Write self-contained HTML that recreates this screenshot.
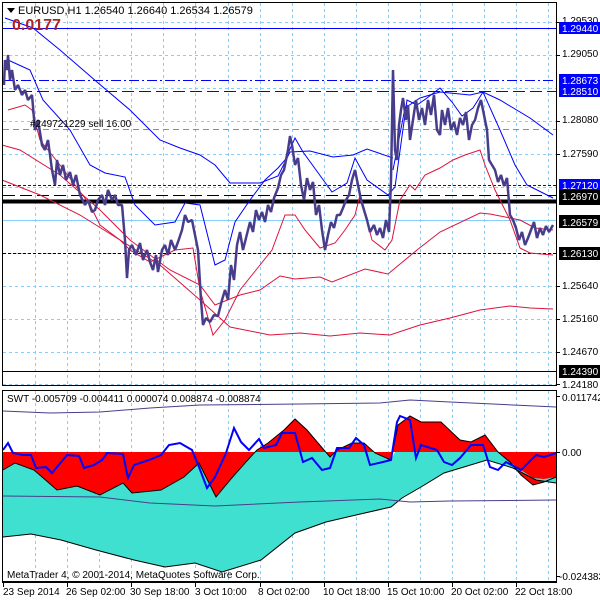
<!DOCTYPE html>
<html><head><meta charset="utf-8"><style>
html,body{margin:0;padding:0;background:#fff;}
svg{display:block;font-family:"Liberation Sans",sans-serif;}
</style></head><body>
<svg width="600" height="600" viewBox="0 0 600 600" xmlns="http://www.w3.org/2000/svg">
<rect width="600" height="600" fill="#fff"/>
<g stroke="#87cefa" stroke-width="1" stroke-dasharray="3,3" fill="none">
<path d="M35.5 3V385M67.5 3V385M99.5 3V385M131.5 3V385M163.5 3V385M195.5 3V385M228.5 3V385M260.5 3V385M292.5 3V385M324.5 3V385M356.5 3V385M388.5 3V385M420.5 3V385M452.5 3V385M484.5 3V385M516.5 3V385M548.5 3V385"/>
<path d="M3 22.5H556M3 55.5H556M3 88.5H556M3 121.5H556M3 154.5H556M3 187.5H556M3 253.5H556M3 286.5H556M3 319.5H556M3 352.5H556M3 384.5H556"/>
<path d="M35.5 391V582M67.5 391V582M99.5 391V582M131.5 391V582M163.5 391V582M195.5 391V582M228.5 391V582M260.5 391V582M292.5 391V582M324.5 391V582M356.5 391V582M388.5 391V582M420.5 391V582M452.5 391V582M484.5 391V582M516.5 391V582M548.5 391V582"/>
</g>
<path d="M3 28.5H556" stroke="#0000ff" stroke-width="1"/>
<path d="M3 80.5H556" stroke="#0000ff" stroke-dasharray="10,3,2,3"/>
<path d="M3 91.5H556" stroke="#0000ff" stroke-dasharray="12,5"/>
<path d="M3 129.5H556" stroke="#32cd32" stroke-dasharray="6,4"/>
<path d="M3 185.5H556" stroke="#0000ff" stroke-dasharray="3,2"/>
<path d="M3 195.5H556" stroke="#000" stroke-dasharray="12,5"/>
<path d="M3 201.5H556" stroke="#000" stroke-width="4"/>
<path d="M3 220.5H556" stroke="#87cefa"/>
<path d="M3 253.5H556" stroke="#000" stroke-dasharray="3,2"/>
<path d="M3 371.5H556" stroke="#000"/>
<g fill="none" stroke="#0000ff" stroke-width="1">
<polyline points="5,18 33,28 60,50 97,82 130,110 160,140 180,148 200,155 215,165 230,183 260,183 278,176 290,152 310,151 333,157 353,155 367,149 393,158"/>
<polyline points="8,60 30,70 43,100 70,130 90,165 105,173 125,177 135,205 155,225 175,222 185,203 200,205 215,265 225,260 235,222 250,200 265,180 278,168 285,160 295,138 303,152 332,192 347,183 355,158 367,180 388,195 395,187 407,100 417,105 427,98 440,88 452,102 462,116 473,108 483,92 500,130 515,165 527,185 553,198"/>
<polyline points="393,170 405,108 420,98 440,92 470,95 483,92 500,100 530,118 553,135"/>
</g>
<g fill="none" stroke="#dc143c" stroke-width="1">
<polyline points="8,110 25,105 32,110 40,140 60,165 90,205 100,225 120,240 130,250 150,262 175,250 193,248 200,290 213,335 225,320 240,290 260,265 272,250 285,215 295,215 305,230 320,248 335,243 345,230 355,215 360,195 372,240 385,250 392,240 400,200 410,185 415,190 425,175 440,168 453,160 465,155 480,150 485,165 495,190 510,220 520,248 530,253 553,255"/>
<polyline points="2,145 20,150 60,175 100,210 130,240 170,270 200,285 215,305 240,295 260,290 280,276 295,279 320,277 332,282 365,269 388,274 417,250 440,232 480,213 490,214 520,220 535,228 553,230"/>
<polyline points="2,180 40,195 80,215 120,240 160,265 200,300 230,327 270,335 300,333 330,336 360,333 390,335 420,325 450,318 480,310 510,306 530,308 553,309"/>
</g>
<polyline fill="none" stroke="#483d8b" stroke-width="2.5" stroke-linejoin="bevel" points="4,85 5,60 7,70 8,55 10,80 12,70 15,90 18,85 22,95 25,90 28,100 32,95 35,130 38,120 42,145 45,150 48,140 52,170 55,185 57,160 60,175 63,165 66,180 70,172 73,185 76,175 80,195 85,205 88,200 92,212 95,210 98,200 102,195 105,205 108,190 112,200 115,195 118,205 122,205 125,240 127,278 129,250 132,245 136,255 140,243 143,260 147,250 150,262 153,270 156,255 158,272 162,250 165,245 168,255 171,240 175,250 178,242 182,230 185,215 188,222 192,220 195,235 198,250 201,300 203,325 206,318 210,322 214,315 218,316 222,300 225,290 228,300 231,265 234,280 237,245 240,232 243,250 246,238 250,222 253,232 256,210 259,220 262,212 265,222 268,205 271,212 274,198 278,188 281,175 284,170 286,160 288,150 290,136 292,145 295,165 298,158 301,185 304,200 307,178 310,190 313,182 316,215 319,205 322,230 325,250 328,235 331,222 334,228 337,215 340,215 343,208 346,200 349,195 352,180 355,170 358,185 361,200 364,210 367,220 370,232 374,225 377,235 380,228 383,238 386,220 389,232 391,180 393,70 395,150 397,160 399,125 401,110 403,98 406,120 408,105 410,140 413,120 416,100 419,120 422,108 425,125 428,100 431,115 434,95 437,130 440,135 442,110 445,125 448,108 451,130 454,122 457,135 460,118 463,125 466,112 469,140 472,125 475,120 478,108 481,100 484,115 487,130 489,160 492,165 495,170 498,182 501,175 504,186 507,178 510,215 513,220 516,228 519,240 522,232 525,245 528,238 531,230 534,222 537,238 540,228 543,235 546,226 549,232 553,225"/>
<text x="30" y="127" font-size="10" fill="#000">#249721229 sell 16.00</text>
<rect x="2.5" y="2.5" width="554" height="383" fill="none" stroke="#000"/>
<rect x="2.5" y="390.5" width="554" height="191" fill="none" stroke="#000"/>
<path d="M2 582.5H557" stroke="#000"/>
<path d="M7 8h8l-4 5z" fill="#000"/>
<text x="18" y="14" font-size="11" fill="#000">EURUSD,H1  1.26540 1.26640 1.26534 1.26579</text>
<text x="12" y="30" font-size="16" font-weight="bold" fill="#b22222">0.0177</text>
<g font-size="10" fill="#000">
<text x="562" y="24">1.29530</text>
<text x="562" y="57">1.29050</text>
<text x="562" y="123">1.28080</text>
<text x="562" y="157">1.27590</text>
<text x="562" y="289">1.25640</text>
<text x="562" y="322">1.25160</text>
<text x="562" y="355">1.24670</text>
<text x="562" y="388">1.24180</text>
</g>
<g stroke="#000"><path d="M557 22.5h3M557 55.5h3M557 121.5h3M557 154.5h3M557 286.5h3M557 319.5h3M557 352.5h3M557 384.5h3"/></g>
<g font-size="10">
<rect x="559" y="22" width="41" height="12" fill="#0000ff"/><text x="562" y="32" fill="#fff">1.29440</text>
<rect x="559" y="74" width="41" height="12" fill="#0000ff"/><text x="562" y="84" fill="#fff">1.28673</text>
<rect x="559" y="85" width="41" height="12" fill="#0000ff"/><text x="562" y="95" fill="#fff">1.28510</text>
<rect x="559" y="179" width="41" height="12" fill="#0000ff"/><text x="562" y="189" fill="#fff">1.27120</text>
<rect x="559" y="190" width="41" height="15" fill="#000"/><text x="562" y="200" fill="#fff">1.26970</text>
<rect x="559" y="215" width="41" height="13" fill="#000"/><text x="562" y="226" fill="#fff">1.26579</text>
<rect x="559" y="247" width="41" height="13" fill="#000"/><text x="562" y="257" fill="#fff">1.26130</text>
<rect x="559" y="365" width="41" height="13" fill="#000"/><text x="562" y="375" fill="#fff">1.24390</text>
</g>
<polygon fill="#ff0000" points="3,452 3,470 15,463 34,470 57,490 77,486 100,495 123,483 132,493 161,490 184,477 199,463 216,497 230,480 245,463 257,450 268,443 284,430 295,419 307,430 318,443 330,457 337,450 352,443 364,443 375,453 391,460 398,425 410,416 421,422 441,422 460,440 471,442 485,435 498,452 510,462 521,475 533,485 544,482 556,477 556,452"/>
<polygon fill="#40e0d0" points="3,452 3,470 15,463 34,470 57,490 77,486 100,495 123,483 132,493 161,490 184,477 199,463 216,497 230,480 245,463 256,452 325,452 330,457 334,452 372,452 375,453 391,460 395,452 498,452 510,462 521,470 533,478 544,479 556,477 556,483 536,480 513,468 487,460 444,473 421,487 402,498 391,507 356,515 326,522 295,533 261,560 222,572 195,563 165,567 134,560 96,550 61,540 31,534 3,537"/>
<g fill="none" stroke="#000" stroke-width="1">
<polyline points="3,470 15,463 34,470 57,490 77,486 100,495 123,483 132,493 161,490 184,477 199,463 216,497 230,480 245,463 257,450 268,443 284,430 295,419 307,430 318,443 330,457 337,450 352,443 364,443 375,453 391,460 398,425 410,416 421,422 441,422 460,440 471,442 485,435 498,452 510,462 521,475 533,485 544,482 556,477"/>
<polyline points="3,537 31,534 61,540 96,550 134,560 165,567 195,563 222,572 261,560 295,533 326,522 356,515 391,507 402,498 421,487 444,473 487,460 513,468 536,480 556,483"/>
</g>
<g fill="none" stroke="#483d8b" stroke-width="1">
<polyline points="3,411 50,413 100,412 150,408 200,405 300,404 380,403 410,400 450,402 556,407"/>
<polyline points="3,496 100,497 150,503 215,506 300,502 380,499 410,502 450,501 556,500"/>
</g>
<polyline fill="none" stroke="#0000ff" stroke-width="2" points="3,450 8,443 13,453 23,455 31,455 36,468 46,467 52,473 57,467 67,455 79,456 84,468 94,465 102,460 107,453 123,454 128,478 134,465 149,460 161,455 169,445 180,443 192,450 199,467 207,488 215,477 226,453 234,428 241,442 249,450 259,439 264,448 276,445 282,433 295,433 303,462 312,458 322,470 330,468 337,448 349,448 356,438 364,445 370,465 383,462 391,460 397,422 400,416 410,420 416,458 421,445 437,450 444,462 452,465 460,458 471,445 483,445 490,467 498,470 506,462 521,470 536,455 544,457 556,453"/>
<text x="7" y="402" font-size="10" fill="#000">SWT -0.005709 -0.004411 0.000074 0.008874 -0.008874</text>
<text x="7" y="578" font-size="10" fill="#000">MetaTrader 4, © 2001-2014, MetaQuotes Software Corp.</text>
<g font-size="10" fill="#000">
<text x="562" y="401">0.011742</text>
<text x="562" y="456">0.00</text>
<text x="559" y="580">-0.024383</text>
</g>
<g stroke="#000"><path d="M557 396.5h3M557 452.5h3M557 576.5h3"/>
<path d="M3.5 583v4M67.5 583v4M131.5 583v4M195.5 583v4M260.5 583v4M324.5 583v4M388.5 583v4M452.5 583v4M516.5 583v4"/></g>
<g font-size="10" fill="#000">
<text x="3" y="595">23 Sep 2014</text>
<text x="66" y="595">26 Sep 02:00</text>
<text x="130" y="595">30 Sep 18:00</text>
<text x="195" y="595">3 Oct 10:00</text>
<text x="258" y="595">8 Oct 02:00</text>
<text x="323" y="595">10 Oct 18:00</text>
<text x="387" y="595">15 Oct 10:00</text>
<text x="451" y="595">20 Oct 02:00</text>
<text x="515" y="595">22 Oct 18:00</text>
</g>
</svg>
</body></html>
